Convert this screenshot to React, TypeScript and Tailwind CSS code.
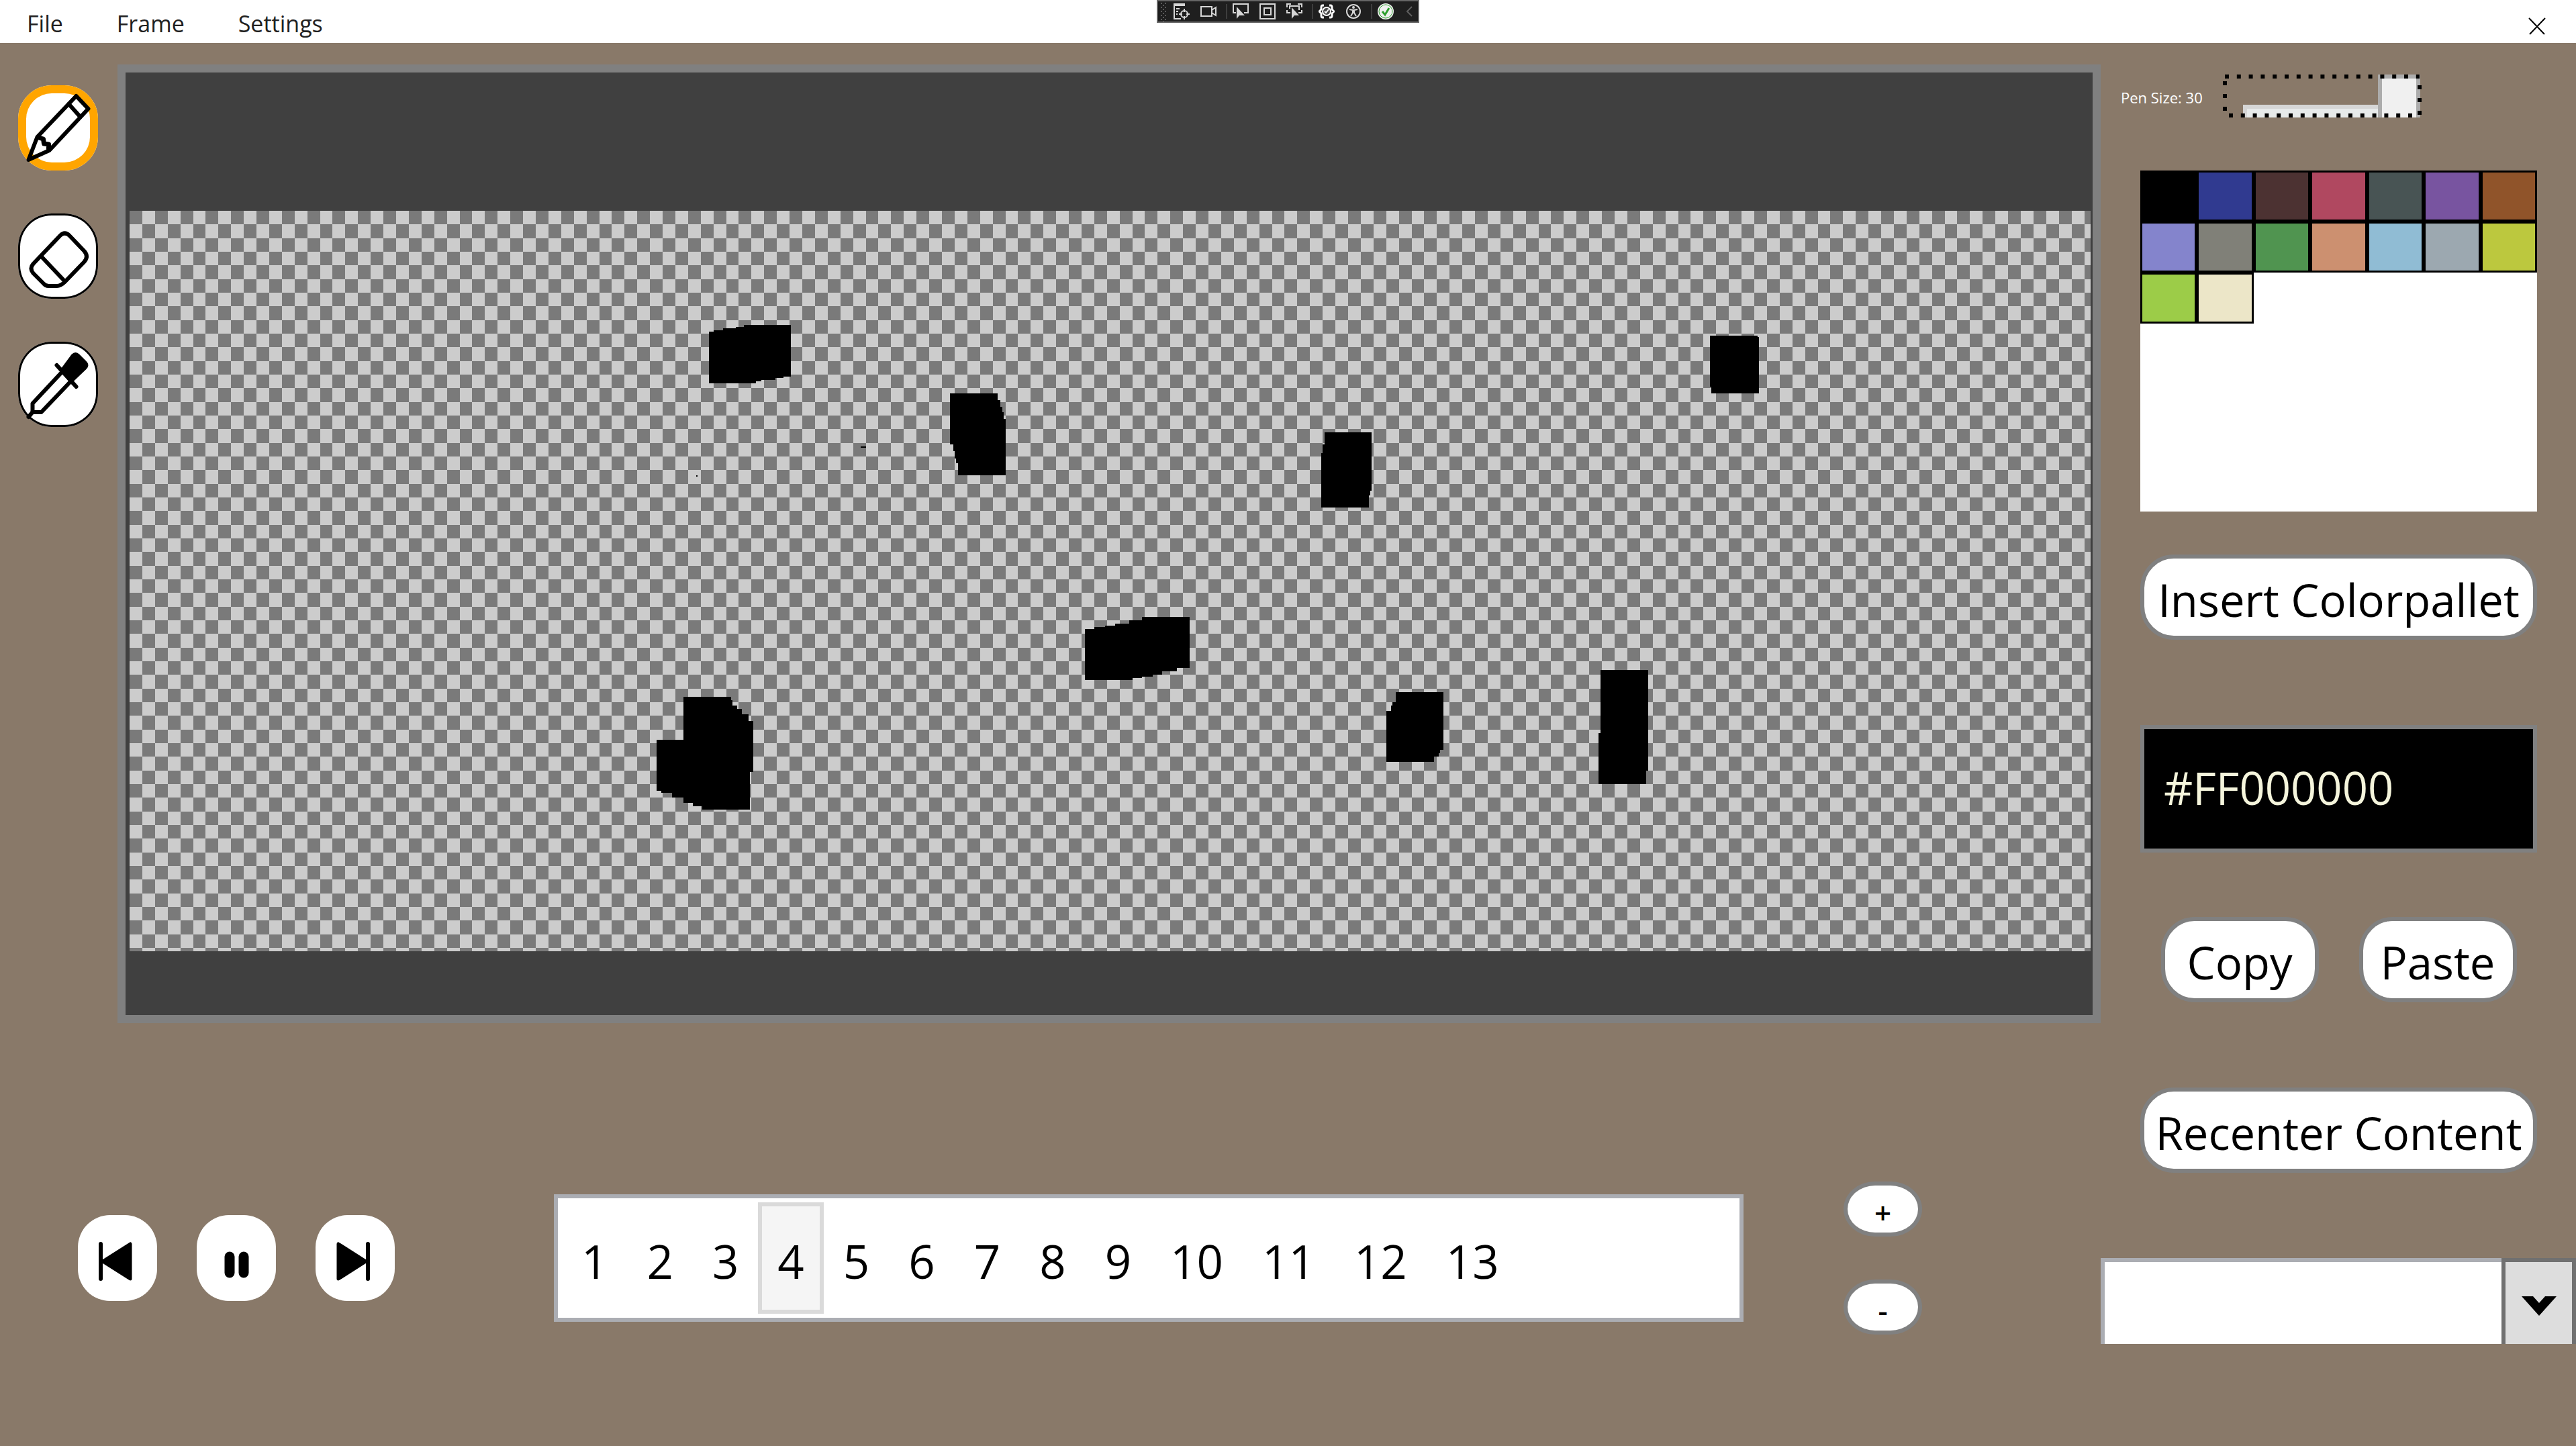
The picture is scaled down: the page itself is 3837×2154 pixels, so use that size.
import { useState, type ReactNode } from 'react';

const COLS = 155;
const ROWS = 55;

const lightCells = Array.from({ length: COLS * ROWS }, (_, i) => ({ c: i % COLS, r: Math.floor(i / COLS) }))
  .filter(({ c, r }) => (c + r) % 2 === 1)
  .map(({ c, r }) => `M${c * 8} ${r * 8}h8v8h-8z`)
  .join('');

const strokes = [
  'M365 71H368V70H374V69H382V68H387V67H417V97H412V98H407V99H398V100H395V101H365Z',
  'M517 107H547V111H549V115H550V118H551V122H552V155H522V148H521V145H520V141H519V137H517Z',
  'M349 285H379V287H380V290H383V292H386V295H390V299H393V329H391V351H361V349H355V347H349V344H342V341H335V340H332V310H349Z',
  'M602 245H608V244H615V243H621V242H630V240H638V238H668V268H660V270H651V272H645V273H638V274H632V275H602Z',
  'M996 73H1026V74H1027V107H997V103H996Z',
  'M753 130H783V164H782V167H781V174H751V142H752V137H753Z',
  'M798 282H828V316H826V318H825V320H822V323H792V293H795V290H796V288H798Z',
  'M927 269H957V328H956V336H926V306H927Z',
  'M357 155h1v1h-1z',
  'M461 138h3v1h-3z',
];

const palette = [
  '#000000', '#303a90', '#4c3232', '#b04860', '#485454', '#7854a0', '#90542a',
  '#8484cc', '#808078', '#509450', '#cc9070', '#90bcd4', '#9ca8b0', '#bcc83e',
  '#9ccc48', '#ece6c8',
];

const tools = [
  {
    name: 'Pen',
    art: (
      <g fill="none" stroke="#000" strokeWidth="6" strokeLinejoin="round" strokeLinecap="round">
        <path d="M15 111L28 77L86 16L104 35L46 97Z" />
        <path d="M75 28L92 47" />
        <path d="M30 78L37 80L38 87L45 88L45 95" strokeWidth="7" />
      </g>
    ),
  },
  {
    name: 'Eraser',
    art: (
      <g fill="none" stroke="#000" strokeWidth="6" strokeLinejoin="round">
        <path d="M62 33Q69 26 76 33L98 56Q105 64 98 72L69 102Q63 108 57 108H45Q40 108 37 104L22 89Q16 82 22 75Z" />
        <path d="M34 64L69 101" />
      </g>
    ),
  },
  {
    name: 'Color picker',
    art: (
      <g fill="none" stroke="#000" strokeWidth="6" strokeLinejoin="round" strokeLinecap="round">
        <path d="M64 46L21 92V105H34L77 60" />
        <path d="M21 105L15 112M57 35L86 67" />
        <path d="M79 19Q85 13 91 19L101 29Q107 35 101 41L79 62L62 42Z" fill="#000" stroke="none" />
      </g>
    ),
  },
];

function DebugIcon({ label, children }: { label: string; children: ReactNode }) {
  return (
    <button aria-label={label} className="flex h-full w-10 items-center justify-center">
      <svg viewBox="0 0 24 24" className="size-6" fill="none" stroke="#d6d6d6" strokeWidth="2">
        {children}
      </svg>
    </button>
  );
}

const Separator = () => (
  <span className="flex w-2 justify-end">
    <span className="h-[22px] w-0.5 bg-[#3d3d3d]" />
  </span>
);

function DebugBar() {
  return (
    <div className="absolute inset-x-0 top-0 mx-auto flex h-[34px] w-fit items-center border-2 border-[#666] bg-[#1f1f1f]">
      <svg viewBox="0 0 15 30" className="h-[30px] w-[15px]" fill="#5a5a5a">
        {[2, 8, 14, 20, 26].map((y) => (
          <path key={y} d={`M4 ${y}h2v2h-2zM10 ${y}h2v2h-2zM7 ${y + 3}h2v2h-2z`} />
        ))}
      </svg>
      <DebugIcon label="Go to live visual tree">
        <path d="M0 0H17V4H0Z" fill="#d6d6d6" stroke="none" />
        <path d="M1 4V23H11M4 8H9M4 12H7M4 16H6" />
        <circle cx="16" cy="16" r="5" />
        <path d="M16 8v5M16 19v5M8 16h5M19 16h5" />
      </DebugIcon>
      <DebugIcon label="Show in XAML live preview">
        <path d="M1 5H17V19H1ZM17 10L23 6V18L17 14" />
      </DebugIcon>
      <Separator />
      <DebugIcon label="Select element">
        <path d="M5 14H1V1H23V14H17" />
        <path d="M6 5V23L10 18L18 18Z" fill="#d6d6d6" stroke="none" />
      </DebugIcon>
      <DebugIcon label="Display layout adorners">
        <path d="M1 1H23V23H1Z" />
        <path d="M7 7H17V17H7Z" />
      </DebugIcon>
      <DebugIcon label="Track focused element">
        <path d="M1 6V1H7M17 1H23V6M23 10V14H18M1 10V14H6M5 8V4H19V10" />
        <path d="M8 6V23L12 18L19 18Z" fill="#d6d6d6" stroke="none" />
      </DebugIcon>
      <Separator />
      <DebugIcon label="Binding failures">
        <path
          d="M8 3H6Q4 3 4 6V9L1 12L4 15V18Q4 21 6 21H8M16 3H18Q20 3 20 6V9L23 12L20 15V18Q20 21 18 21H16"
          stroke="#fff"
          strokeWidth="3"
        />
        <circle cx="12" cy="12" r="6" fill="#4a4a4a" stroke="#fff" />
        <path d="M9 12L11 14L15 9" stroke="#fff" />
      </DebugIcon>
      <DebugIcon label="Scan for accessibility issues">
        <circle cx="12" cy="12" r="10" />
        <circle cx="12" cy="6" r="2" fill="#d6d6d6" stroke="none" />
        <path d="M6 9L11 10V14L8 19M18 9L13 10V14L16 19M11 11H13V14H11Z" />
      </DebugIcon>
      <Separator />
      <DebugIcon label="Hot reload available">
        <circle cx="12" cy="12" r="12" fill="#f0f0f0" stroke="none" />
        <circle cx="12" cy="12" r="10" stroke="#2e9e2e" strokeWidth="1" />
        <path d="M7 12L11 17L17 7" stroke="#2e9e2e" strokeWidth="3" />
      </DebugIcon>
      <button aria-label="Collapse toolbar" className="flex w-7 items-center pl-2.5">
        <svg viewBox="0 0 10 16" className="h-4 w-[10px]" fill="none" stroke="#5e5e5e" strokeWidth="2">
          <path d="M9 1L2 8L9 15" />
        </svg>
      </button>
    </div>
  );
}

function PillButton({ children, className }: { children: ReactNode; className: string }) {
  return (
    <button
      className={`flex h-[127px] items-center justify-center rounded-[50px] border-[6px] border-[#808080] bg-white pt-1.5 text-[67px] leading-[90px] whitespace-nowrap text-black ${className}`}
    >
      {children}
    </button>
  );
}

function Transport({ label, children }: { label: string; children: ReactNode }) {
  return (
    <button aria-label={label} className="h-[128px] w-[118px] rounded-[48px] bg-white">
      <svg viewBox="0 0 118 128" className="size-full">
        {children}
      </svg>
    </button>
  );
}

export default function App() {
  const [tool, setTool] = useState('Pen');
  const [frame, setFrame] = useState(4);
  const [penSize, setPenSize] = useState(30);

  return (
    <div className="flex min-h-screen flex-col bg-[#897969] font-['Open_Sans',sans-serif]">
      <header className="relative flex h-16 items-center justify-between bg-white">
        <nav className="flex gap-20 pt-1.5 pl-10 text-[34px] leading-[46px] text-[#212121]">
          <button>File</button>
          <button>Frame</button>
          <button>Settings</button>
        </nav>
        <DebugBar />
        <button aria-label="Close" className="mr-[45px] pt-3.5">
          <svg viewBox="0 0 26 26" className="size-[26px]" fill="none" stroke="#000" strokeWidth="2">
            <path d="M1 1L24 25M25 1L2 25" />
          </svg>
        </button>
      </header>

      <div className="flex flex-1">
        <main className="flex min-w-0 flex-1 flex-col">
          <div className="flex">
            <div className="flex w-[175px] flex-col gap-16 pt-[63px] pl-[27px]">
              {tools.map((t) => (
                <button
                  key={t.name}
                  aria-label={t.name}
                  aria-pressed={tool === t.name}
                  onClick={() => setTool(t.name)}
                  className={`h-[127px] w-[119px] rounded-[50px] bg-white ${
                    tool === t.name
                      ? 'shadow-[inset_0_0_0_12px_#ffa500]'
                      : 'shadow-[inset_0_0_0_3px_#000]'
                  }`}
                >
                  <svg viewBox="0 0 118 127" className="size-full">
                    {t.art}
                  </svg>
                </button>
              ))}
            </div>
            <div className="mt-8 flex-1 border-[12px] border-[#808080] bg-[#404040] pt-[206px] pr-[3px] pb-[95px] pl-[6px]">
              <svg
                role="img"
                aria-label="Drawing canvas"
                viewBox="0 0 1236 434"
                preserveAspectRatio="none"
                shapeRendering="crispEdges"
                className="block h-[1103px] w-full"
              >
                <path d="M0 0H1236V434H0Z" fill="#7a7a7a" />
                <path d={lightCells} fill="#cccccc" />
                <path d={strokes.join('')} fill="#000" />
              </svg>
            </div>
          </div>

          <div className="mt-[236px] flex items-center pr-[266px] pl-[116px]">
            <div className="flex gap-[59px]">
              <Transport label="Previous frame">
                <path d="M34 43V95" stroke="#000" strokeWidth="6" strokeLinecap="round" />
                <path d="M37 69L78 43V95Z" fill="#000" stroke="#000" strokeWidth="5" strokeLinejoin="round" />
              </Transport>
              <Transport label="Pause">
                <path d="M49 62V86M70 62V86" stroke="#000" strokeWidth="15" strokeLinecap="round" />
              </Transport>
              <Transport label="Next frame">
                <path d="M78 43V95" stroke="#000" strokeWidth="6" strokeLinecap="round" />
                <path d="M75 69L34 43V95Z" fill="#000" stroke="#000" strokeWidth="5" strokeLinejoin="round" />
              </Transport>
            </div>
            <ul className="ml-[237px] flex h-[190px] flex-1 border-[6px] border-[#abadb3] bg-white p-1.5 text-[69px] leading-[92px] text-black">
              {Array.from({ length: 13 }, (_, i) => i + 1).map((n) => (
                <li key={n} className="flex">
                  <button
                    onClick={() => setFrame(n)}
                    className={`border-[6px] px-[23px] pt-2 ${
                      n === frame ? 'border-[#dadada] bg-[#f5f5f5]' : 'border-transparent'
                    }`}
                  >
                    {n}
                  </button>
                </li>
              ))}
            </ul>
            <div className="ml-[149px] flex flex-col gap-16 text-[44px] leading-[60px] font-semibold text-black">
              <button aria-label="Add frame" className="flex h-[82px] w-[117px] items-center justify-center rounded-[47px/41px] border-[6px] border-[#808080] bg-white pt-2.5">
                +
              </button>
              <button aria-label="Remove frame" className="flex h-[82px] w-[117px] items-center justify-center rounded-[47px/41px] border-[6px] border-[#808080] bg-white pt-2.5">
                -
              </button>
            </div>
          </div>
        </main>

        <aside className="flex w-[708px] flex-col pt-[47px]">
          <div className="flex items-center pl-[30px]">
            <label htmlFor="pen-size" className="w-[152px] pt-1 text-[22px] leading-[30px] whitespace-nowrap text-white">
              Pen Size: {penSize}
            </label>
            <div className="relative flex h-16 w-[296px] pr-0.5 pl-[30px]">
              <div className="absolute right-2 bottom-0 left-[30px] h-[19px] border-t-[6px] border-l-[6px] border-[#d6d6d6] bg-[#e7eaea]" />
              <input
                id="pen-size"
                type="range"
                min={1}
                max={30}
                value={penSize}
                onChange={(e) => setPenSize(Number(e.target.value))}
                className="relative h-16 w-full appearance-none bg-transparent outline-none [&::-webkit-slider-thumb]:h-16 [&::-webkit-slider-thumb]:w-[63px] [&::-webkit-slider-thumb]:appearance-none [&::-webkit-slider-thumb]:border-x-[6px] [&::-webkit-slider-thumb]:border-t-[6px] [&::-webkit-slider-thumb]:border-[#acacac] [&::-webkit-slider-thumb]:bg-[#f0f0f0]"
              />
              <svg viewBox="0 0 296 64" className="pointer-events-none absolute inset-0 size-full" fill="none" stroke="#000" strokeWidth="6">
                <path d="M3 3H293" strokeDasharray="6 11.8" />
                <path d="M9 61H290" strokeDasharray="6 11.8" />
                <path d="M3 10V58" strokeDasharray="6 13" />
                <path d="M293 16V62" strokeDasharray="6 13" />
              </svg>
            </div>
          </div>

          <div className="mt-[79px] mr-[58px] ml-[59px] flex flex-col">
            <div className="h-[508px] bg-white">
              <div className="grid grid-cols-7">
                {palette.map((color) => (
                  <button
                    key={color}
                    aria-label={`Color ${color}`}
                    className="h-[76px] border-[3px] border-black"
                    style={{ backgroundColor: color }}
                  />
                ))}
              </div>
            </div>
            <PillButton className="mt-16">Insert Colorpallet</PillButton>
            <input
              aria-label="Current color"
              defaultValue="#FF000000"
              className="mt-[127px] h-[190px] w-full border-[6px] border-[#808080] bg-black px-[29px] pb-1 text-[67px] leading-[90px] text-[#f5f5dc] outline-none"
            />
            <div className="mt-24 flex justify-center gap-[60px]">
              <PillButton className="w-[235px]">Copy</PillButton>
              <PillButton className="w-[235px]">Paste</PillButton>
            </div>
            <PillButton className="mt-[127px]">Recenter Content</PillButton>
          </div>

          <div className="relative mt-[127px] h-32">
            <select
              aria-label="Animation"
              className="size-full appearance-none border-t-[6px] border-l-[6px] border-[#abadb3] bg-white px-6 text-[66px] outline-none"
            >
              <option></option>
            </select>
            <span className="pointer-events-none absolute inset-y-0 right-0 flex w-[111px] items-center justify-center border-x-[6px] border-t-[6px] border-[#707070] bg-[#dddddd] pt-2">
              <svg viewBox="0 0 52 29" className="h-[29px] w-[52px]">
                <path d="M0 0H17L26 10L35 0H52L26 29Z" fill="#000" />
              </svg>
            </span>
          </div>
        </aside>
      </div>
    </div>
  );
}
